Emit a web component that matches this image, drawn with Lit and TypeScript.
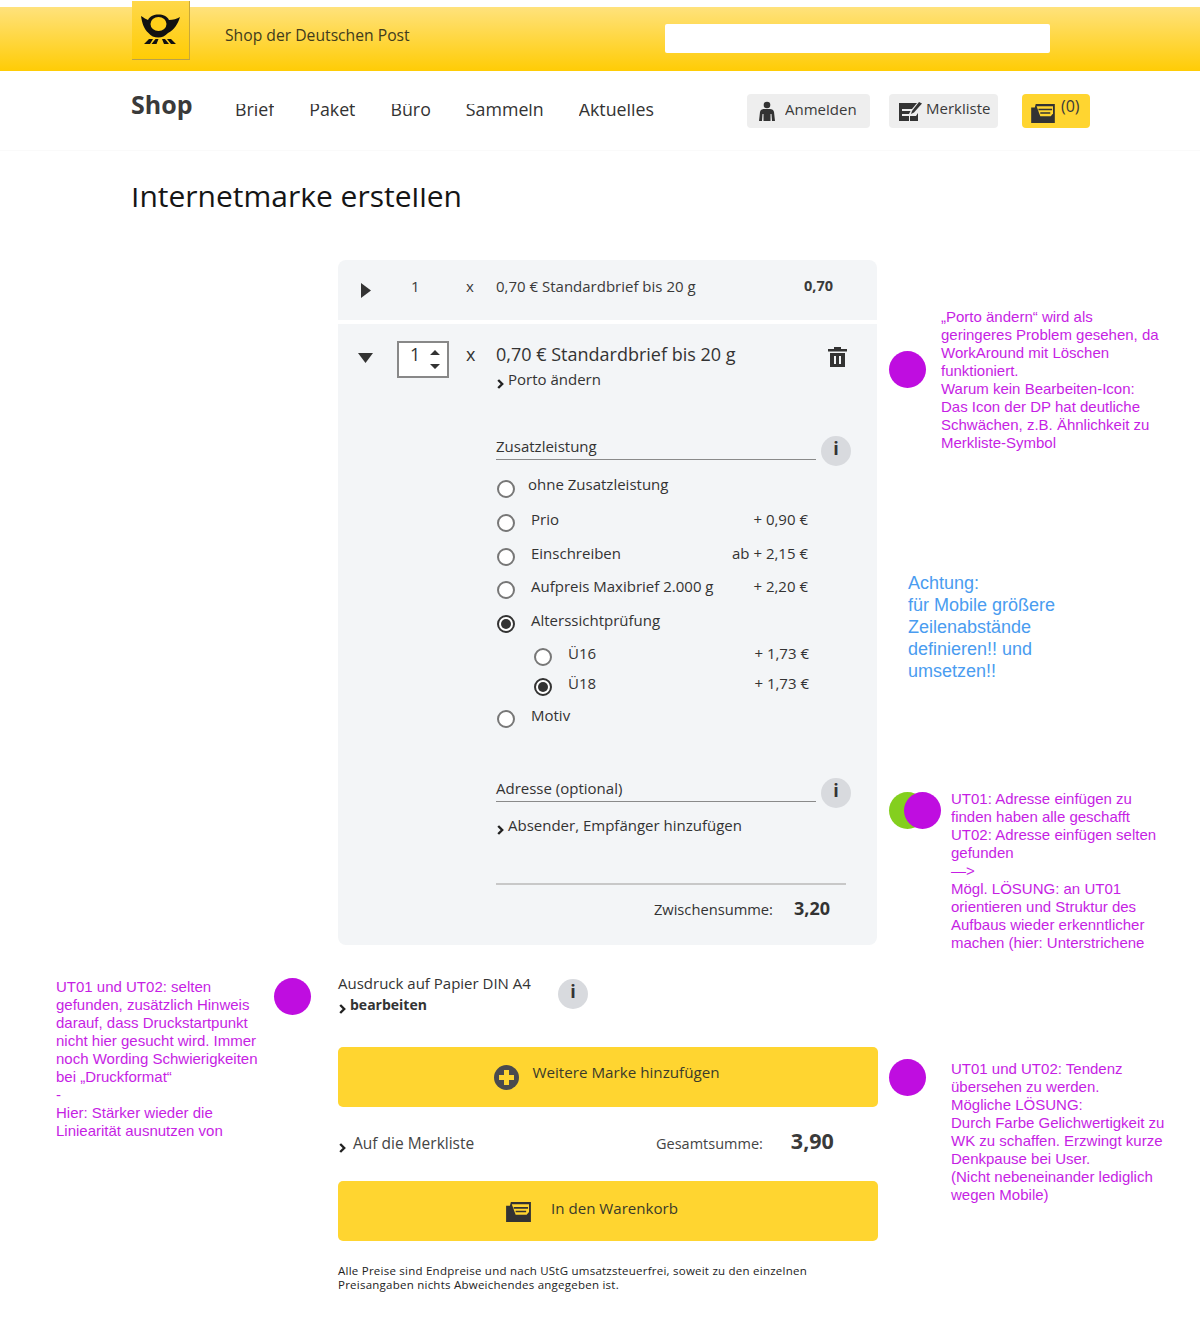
import { LitElement, html, css, svg } from 'lit';
import { customElement } from 'lit/decorators.js';

const cartIcon = (w: number, h: number, fg: string, bg: string) => html`<svg width=${w} height=${h} viewBox="0 0 26 22">
  <path d="M0 5h4l1-4h21v21H0z" fill=${fg}/>
  <path d="M6 3.500h18v8l-2.500 3H10z" fill=${bg}/>
  <path d="M8 7.200h15M10 11h11" stroke=${fg} stroke-width="1.800" fill="none"/>
</svg>`;

const chevron = html`<svg class="chev" width="7" height="10" viewBox="0 0 7 10"><path d="M1.200 1l4 4-4 4" fill="none" stroke="#222" stroke-width="2.400"/></svg>`;

const info = html`<span class="info">i</span>`;

const horn = svg`
  <path d="M0 2C3 4 5 5 7 6 9 2 13 .5 17.500 .5 22 .5 26 2 28 6 32 6 36 5 39 3 37 10 33 16 27 19 24 22 21 23.500 17.500 23.500 13 23.500 10 22 7.500 19 3 15 1 9 0 2z" fill="#111"/>
  <ellipse cx="17.500" cy="10" rx="8" ry="7" fill="#ffcf1a"/>
  <path d="M3 30l5-5h4l-3 5zM10.500 30l4-5h3l-2 5zM21 25h3l4 5h-5zM26 25h4l5 5h-5z" fill="#111"/>`;

@customElement('app-root')
export class AppRoot extends LitElement {
  static styles = css`
    :host {
      display: block;
      height: 1343px;
      overflow: hidden;
      background: #fff;
      font-family: "Open Sans", "Noto Sans", sans-serif;
      color: #333;
    }
    .top {
      margin-top: 7px;
      height: 64px;
      box-sizing: border-box;
      background: linear-gradient(#ffe27c, #ffcc05);
      position: relative;
      display: flex;
      align-items: flex-start;
      padding: 17px 0 0 225px;
    }
    .logo {
      position: absolute;
      left: 132px;
      top: -6px;
      width: 58px;
      height: 59px;
      background: linear-gradient(#ffd84a, #ffcc05);
      border-right: 1px solid #c8a83a;
      border-bottom: 1px solid #b9a04a;
      box-sizing: border-box;
      display: flex;
      justify-content: center;
      align-items: flex-start;
      padding-top: 13px;
    }
    .top-title {
      font-size: 15.700px;
      line-height: 22px;
      color: #423c1c;
      width: 440px;
    }
    .search {
      width: 385px;
      height: 29px;
      background: #fff;
      border-radius: 2px;
    }
    .nav {
      height: 79px;
      border-bottom: 1px solid #fafafa;
      display: flex;
      padding-left: 131px;
      box-sizing: content-box;
    }
    .brand {
      font-size: 25px;
      font-weight: 700;
      color: #3a3a3a;
      margin-top: 16px;
      width: 104px;
      line-height: 34px;
    }
    .links {
      display: flex;
      gap: 35px;
      margin-top: 28px;
      width: 512px;
      font-size: 17.800px;
      line-height: 20px;
    }
    .links span {
      display: block;
      clip-path: inset(5px 0 0 0);
    }
    .actions {
      display: flex;
      margin-top: 23px;
      height: 34px;
    }
    .act {
      display: flex;
      align-items: center;
      background: #eeeeee;
      border-radius: 4px;
      font-size: 15px;
      color: #3a3a3a;
      box-sizing: border-box;
      height: 34px;
    }
    .act.login { width: 123px; padding-left: 12px; gap: 10px; margin-right: 19px; }
    .act.list { width: 109px; padding-left: 10px; gap: 4px; margin-right: 24px; }
    .act.cart { width: 68px; padding-left: 9px; gap: 6px; background: #ffd530; align-items: flex-start; padding-top: 1px; font-size: 16px; }
    .act.cart svg { margin-top: 8px; }
    .act .lbl { clip-path: inset(6.500px 0 0 0); margin-top: -5px; }
    .act.list .lbl { margin-top: -7px; }
    h1 {
      margin: 25px 0 0 131px;
      font-size: 30px;
      line-height: 40px;
      font-weight: 400;
      color: #151515;
      height: 40px;
      clip-path: inset(12px 0 0 0);
    }
    .grid {
      margin-top: 44px;
      display: grid;
      grid-template-columns: 56px 282px 540px 1fr;
      grid-template-rows: 685px auto;
    }
    .center { grid-column: 3; }
    .note {
      font-family: "Liberation Sans", Arial, sans-serif;
      font-size: 15px;
      line-height: 18px;
      color: #c61ee4;
      white-space: nowrap;
    }
    .dot {
      width: 37px;
      height: 37px;
      border-radius: 50%;
      background: #bf0de0;
      flex: none;
    }
    .card {
      width: 539px;
      background: #f3f5f7;
    }
    .collapsed {
      height: 60px;
      border-radius: 8px 8px 0 0;
      display: grid;
      grid-template-columns: 73px 55px 30px 308px auto;
      font-size: 15px;
      line-height: 20px;
      padding-top: 16px;
      box-sizing: border-box;
      color: #3a3a3a;
    }
    .collapsed svg { margin: 7px 0 0 23px; }
    .collapsed b { font-weight: 700; font-size: 14.500px; }
    .expanded {
      margin-top: 4px;
      height: 621px;
      border-radius: 0 0 8px 8px;
      padding-top: 17px;
      box-sizing: border-box;
    }
    .head {
      display: grid;
      grid-template-columns: 59px 69px 30px 332px auto;
    }
    .head .caret { margin: 12px 0 0 20px; }
    .stepper {
      width: 52px;
      height: 37px;
      box-sizing: border-box;
      border: 2px solid #888;
      background: #fff;
      font-size: 18px;
      line-height: 22px;
      padding-left: 11px;
      position: relative;
    }
    .stepper svg { position: absolute; left: 30px; top: 6px; }
    .times { font-size: 18px; line-height: 26px; }
    .title { font-size: 18px; line-height: 26px; color: #333; }
    .link {
      display: flex;
      align-items: baseline;
      gap: 4px;
      font-size: 15px;
      line-height: 20px;
      color: #333;
    }
    .head .link { margin-top: 2px; }
    .chev { flex: none; position: relative; top: 4px; margin-left: 1px; }
    .trash { margin-top: 6px; }
    .opts { margin: 48px 0 0 158px; width: 356px; }
    .section {
      display: flex;
      width: 356px;
      position: relative;
    }
    .section .lab {
      width: 320px;
      border-bottom: 1px solid #8a8a8a;
      font-size: 15px;
      line-height: 18px;
      padding-bottom: 4px;
    }
    .info {
      width: 30px;
      height: 30px;
      border-radius: 50%;
      background: #d8dade;
      color: #333;
      font-weight: 700;
      font-size: 18px;
      line-height: 24px;
      text-align: center;
      flex: none;
    }
    .section .info { position: absolute; left: 325px; top: -1px; }
    .rows { margin-top: 14px; }
    .row {
      display: flex;
      height: 34px;
      font-size: 15px;
      line-height: 20px;
      color: #333;
      white-space: nowrap;
    }
    .row.first { height: 35px; }
    .row.tall { height: 33px; }
    .row.sub { height: 30px; padding-left: 37px; }
    .row.sub.last { height: 32px; }
    .row.sub .price { margin-right: 43px; }
    .radio {
      width: 18px;
      height: 18px;
      box-sizing: border-box;
      border: 2px solid #777;
      border-radius: 50%;
      background: #fff;
      margin: 5px 16px 0 1px;
      flex: none;
      position: relative;
    }
    .radio.on {
      border-color: #333;
    }
    .radio.on::after {
      content: "";
      position: absolute;
      inset: 2px;
      border-radius: 50%;
      background: #333;
    }
    .row.first .radio { margin: 6px 13px 0 1px; }
    .price { margin-left: auto; text-align: right; margin-right: 44px; }
    .address { margin-top: 40px; }
    .address .link { margin-top: 13px; }
    .subtotal {
      width: 350px;
      border-top: 2px solid #c8c8c8;
      margin-top: 48px;
      display: flex;
      justify-content: flex-end;
      align-items: baseline;
      padding: 10px 16px 0 0;
      box-sizing: border-box;
      gap: 21px;
      font-size: 14.700px;
      line-height: 26px;
    }
    .subtotal b { font-size: 18px; color: #333; }
    .print {
      display: flex;
      margin-top: 28px;
      height: 74px;
    }
    .print .txt { font-size: 15px; line-height: 21px; width: 220px; }
    .print .link { margin-top: 1px; }
    .print .link b { font-weight: 700; font-size: 14px; }
    .print .info { margin-top: 6px; }
    .btn {
      width: 540px;
      height: 60px;
      border-radius: 5px;
      background: #ffd530;
      display: flex;
      justify-content: center;
      align-items: flex-start;
      font-size: 15.200px;
      color: #3a3a2a;
      line-height: 20px;
      padding-top: 15px;
      box-sizing: border-box;
    }
    .btn.add { gap: 13px; padding-right: 2px; }
    .btn.add svg { margin-top: 3px; }
    .btn.wk { gap: 20px; padding: 17px 32px 0 0; font-size: 15.100px; }
    .btn.wk svg { margin-top: 3px; }
    .sum {
      display: flex;
      align-items: baseline;
      height: 74px;
      padding-top: 20px;
      box-sizing: border-box;
      font-size: 14.500px;
      line-height: 28px;
      color: #444;
    }
    .sum .m { width: 318px; display: flex; gap: 7px; align-items: baseline; font-size: 15.500px; }
    .sum b { font-size: 21.500px; margin-left: 28px; color: #3a3a3a; }
    .legal {
      font-size: 11.500px;
      line-height: 14px;
      color: #222;
      margin-top: 23px;
      white-space: nowrap;
      letter-spacing: 0.24px;
    }
    /* annotation columns */
    .right { grid-column: 4; }
    .r1 { display: flex; padding: 48px 0 0 11px; gap: 15px; }
    .r1 .dot { margin-top: 43px; }
    .blue {
      font-family: "Liberation Sans", Arial, sans-serif;
      font-size: 18px;
      line-height: 22px;
      color: #4a9cf0;
      margin: 120px 0 0 30px;
    }
    .r2 { display: flex; padding-top: 108px; margin-left: 11px; gap: 9px; }
    .pair { display: flex; flex: none; margin-top: 2px; width: 53px; }
    .green { width: 37px; height: 37px; border-radius: 50%; background: #84cf1e; margin-right: -22px; flex: none; }
    .left-wrap { grid-column: 1 / 3; grid-row: 2; display: flex; padding: 33px 0 0 56px; gap: 17px; }
    .left-wrap .note { width: 201px; }
    .r3 { display: flex; padding: 114px 0 0 11px; gap: 25px; }
    .r3 .note { margin-top: 1px; }
    .c2 { grid-column: 3; grid-row: 2; }
    .r-second { grid-row: 2; }
  `;

  render() {
    return html`
      <div class="top">
        <div class="logo"><svg width="39" height="30" viewBox="0 0 39 30">${horn}</svg></div>
        <div class="top-title">Shop der Deutschen Post</div>
        <div class="search"></div>
      </div>
      <div class="nav">
        <div class="brand">Shop</div>
        <div class="links">
          ${['Brief', 'Paket', 'Büro', 'Sammeln', 'Aktuelles'].map(l => html`<span>${l}</span>`)}
        </div>
        <div class="actions">
          <div class="act login">
            <svg width="16" height="20" viewBox="0 0 16 20"><circle cx="8" cy="4" r="3.300" fill="#333"/><path d="M0 20l1-9c.3-2 2-3 4-3h6c2 0 3.700 1 4 3l1 9h-3l-.5-7h-1v7H4.500v-7h-1L3 20z" fill="#333"/></svg>
            <span class="lbl">Anmelden</span>
          </div>
          <div class="act list">
            <svg width="23" height="20" viewBox="0 0 23 20"><path d="M0 2h18l-5 6H3v2h8.500l-1.500 3H3v2h7v5H0z" fill="#333"/><path d="M12 13l1-3L20 1l3 1.500-8 9z" fill="#333"/><path d="M11 15h6l2-3v8H11z" fill="#333"/></svg>
            <span class="lbl">Merkliste</span>
          </div>
          <div class="act cart">${cartIcon(24, 20, '#333', '#ffd530')}<span>(0)</span></div>
        </div>
      </div>
      <h1>Internetmarke erstellen</h1>
      <div class="grid">
        <div class="center">
          <div class="card collapsed">
            <svg width="10" height="15" viewBox="0 0 10 15"><path d="M0 0l10 7.500L0 15z" fill="#333"/></svg>
            <span>1</span><span>x</span><span>0,70 € Standardbrief bis 20 g</span><b>0,70</b>
          </div>
          <div class="card expanded">
            <div class="head">
              <svg class="caret" width="15" height="10" viewBox="0 0 15 10"><path d="M0 0h15L7.500 10z" fill="#333"/></svg>
              <div class="stepper">1<svg width="12" height="22" viewBox="0 0 12 22"><path d="M6 1l5 5H1zM1 15h10l-5 5z" fill="#333"/></svg></div>
              <div class="times">x</div>
              <div>
                <div class="title">0,70 € Standardbrief bis 20 g</div>
                <div class="link">${chevron}Porto ändern</div>
              </div>
              <svg class="trash" width="19" height="20" viewBox="0 0 19 20"><path d="M6 0h7v2h6v2.500H0V2h6zM2 6h15v14H2zM6 9v8h2V9zM11 9v8h2V9z" fill="#333" fill-rule="evenodd"/></svg>
            </div>
            <div class="opts">
              <div class="section"><div class="lab">Zusatzleistung</div>${info}</div>
              <div class="rows">
                <div class="row first"><span class="radio"></span>ohne Zusatzleistung</div>
                <div class="row"><span class="radio"></span>Prio<span class="price">+ 0,90 €</span></div>
                <div class="row tall"><span class="radio"></span>Einschreiben<span class="price">ab + 2,15 €</span></div>
                <div class="row"><span class="radio"></span>Aufpreis Maxibrief 2.000 g<span class="price">+ 2,20 €</span></div>
                <div class="row tall"><span class="radio on"></span>Alterssichtprüfung</div>
                <div class="row sub"><span class="radio"></span>Ü16<span class="price">+ 1,73 €</span></div>
                <div class="row sub last"><span class="radio on"></span>Ü18<span class="price">+ 1,73 €</span></div>
                <div class="row"><span class="radio"></span>Motiv</div>
              </div>
              <div class="address">
                <div class="section"><div class="lab">Adresse (optional)</div>${info}</div>
                <div class="link">${chevron}Absender, Empfänger hinzufügen</div>
              </div>
              <div class="subtotal"><span>Zwischensumme:</span><b>3,20</b></div>
            </div>
          </div>
        </div>
        <div class="right">
          <div class="r1">
            <div class="dot"></div>
            <div class="note">„Porto ändern“ wird als<br>geringeres Problem gesehen, da<br>WorkAround mit Löschen<br>funktioniert.<br>Warum kein Bearbeiten-Icon:<br>Das Icon der DP hat deutliche<br>Schwächen, z.B. Ähnlichkeit zu<br>Merkliste-Symbol</div>
          </div>
          <div class="blue">Achtung:<br>für Mobile größere<br>Zeilenabstände<br>definieren!! und<br>umsetzen!!</div>
          <div class="r2">
            <div class="pair"><div class="green"></div><div class="dot"></div></div>
            <div class="note">UT01: Adresse einfügen zu<br>finden haben alle geschafft<br>UT02: Adresse einfügen selten<br>gefunden<br>—&gt;<br>Mögl. LÖSUNG: an UT01<br>orientieren und Struktur des<br>Aufbaus wieder erkenntlicher<br>machen (hier: Unterstrichene</div>
          </div>
        </div>
        <div class="left-wrap">
          <div class="note">UT01 und UT02: selten<br>gefunden, zusätzlich Hinweis<br>darauf, dass Druckstartpunkt<br>nicht hier gesucht wird. Immer<br>noch Wording Schwierigkeiten<br>bei „Druckformat“<br>-<br>Hier: Stärker wieder die<br>Liniearität ausnutzen von</div>
          <div class="dot"></div>
        </div>
        <div class="c2">
          <div class="print">
            <div class="txt">Ausdruck auf Papier DIN A4<div class="link">${chevron}<b>bearbeiten</b></div></div>
            ${info}
          </div>
          <div class="btn add">
            <svg width="25" height="25" viewBox="0 0 25 25"><circle cx="12.500" cy="12.500" r="12.500" fill="#4a4a4e"/><path d="M10 5h5v5h5v5h-5v5h-5v-5H5v-5h5z" fill="#ffd530"/></svg>
            <span>Weitere Marke hinzufügen</span>
          </div>
          <div class="sum">
            <div class="m">${chevron}Auf die Merkliste</div>
            <span>Gesamtsumme:</span><b>3,90</b>
          </div>
          <div class="btn wk">${cartIcon(25, 21, '#333', '#ffd530')}<span>In den Warenkorb</span></div>
          <div class="legal">Alle Preise sind Endpreise und nach UStG umsatzsteuerfrei, soweit zu den einzelnen<br>Preisangaben nichts Abweichendes angegeben ist.</div>
        </div>
        <div class="right r-second">
          <div class="r3">
            <div class="dot"></div>
            <div class="note">UT01 und UT02: Tendenz<br>übersehen zu werden.<br>Mögliche LÖSUNG:<br>Durch Farbe Gelichwertigkeit zu<br>WK zu schaffen. Erzwingt kurze<br>Denkpause bei User.<br>(Nicht nebeneinander lediglich<br>wegen Mobile)</div>
          </div>
        </div>
      </div>
    `;
  }
}
